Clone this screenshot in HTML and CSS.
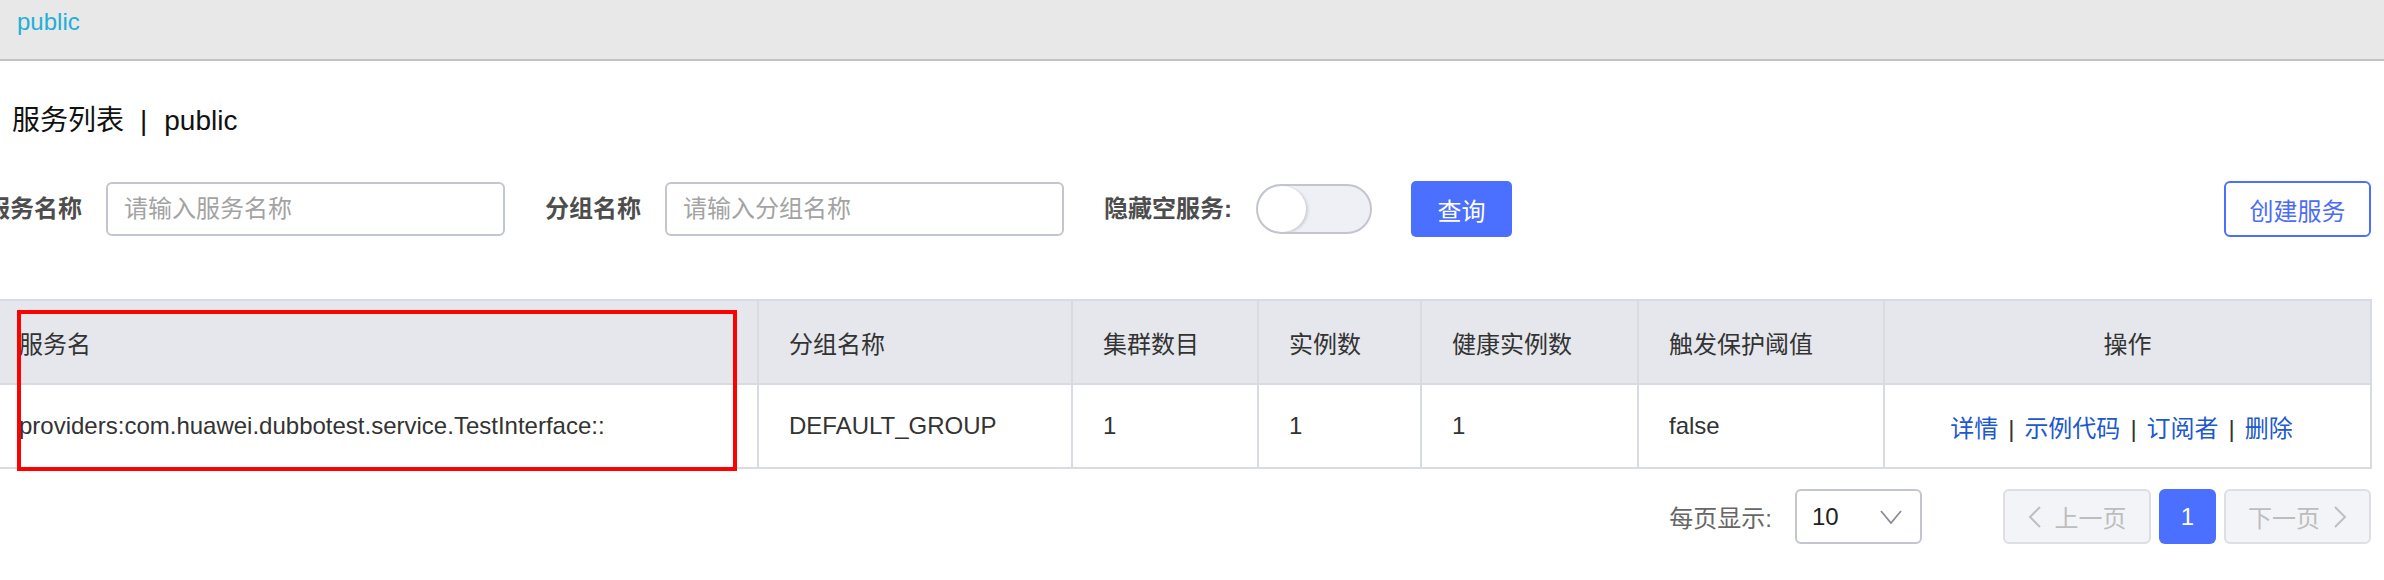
FILE: index.html
```html
<!DOCTYPE html>
<html lang="zh-CN">
<head>
<meta charset="utf-8">
<title>服务列表</title>
<link rel="stylesheet" href="styles.css">
</head>
<body>
<div class="topbar"><span class="ns">public</span></div>
<main class="main">
  <h1 class="title"><span>服务列表</span><span class="title-sep">|</span><span>public</span></h1>

  <div class="search">
    <label class="flabel first">服务名称</label>
    <input class="finput" type="text" placeholder="请输入服务名称">
    <label class="flabel spaced">分组名称</label>
    <input class="finput" type="text" placeholder="请输入分组名称">
    <label class="flabel spaced">隐藏空服务:</label>
    <span class="toggle"><span class="knob"></span></span>
    <button class="btn-primary" type="button">查询</button>
    <button class="btn-outline" type="button">创建服务</button>
  </div>

  <div class="table-wrap">
    <table class="grid">
      <colgroup>
        <col class="c-name"><col class="c-group"><col class="c-cluster"><col class="c-inst"><col class="c-healthy"><col class="c-threshold"><col class="c-ops">
      </colgroup>
      <thead>
        <tr>
          <th>服务名</th>
          <th>分组名称</th>
          <th>集群数目</th>
          <th>实例数</th>
          <th>健康实例数</th>
          <th>触发保护阈值</th>
          <th class="center">操作</th>
        </tr>
      </thead>
      <tbody>
        <tr>
          <td>providers:com.huawei.dubbotest.service.TestInterface::</td>
          <td>DEFAULT_GROUP</td>
          <td>1</td>
          <td>1</td>
          <td>1</td>
          <td>false</td>
          <td class="center ops"><a class="op">详情</a><span class="op-sep">|</span><a class="op">示例代码</a><span class="op-sep">|</span><a class="op">订阅者</a><span class="op-sep">|</span><a class="op">删除</a></td>
        </tr>
      </tbody>
    </table>
    <div class="highlight"></div>
  </div>

  <div class="pager">
    <span class="pager-label">每页显示:</span>
    <span class="select"><span class="select-val">10</span>
      <svg class="select-arrow" width="22" height="14" viewBox="0 0 22 14"><polyline points="1,1 11,13 21,1" fill="none" stroke="#8a8d96" stroke-width="1.8"/></svg>
    </span>
    <span class="pbtn prev"><svg width="13" height="22" viewBox="0 0 13 22"><polyline points="12,1 2,11 12,21" fill="none" stroke="#bdbfc4" stroke-width="2"/></svg><span>上一页</span></span>
    <span class="pbtn current">1</span>
    <span class="pbtn next"><span>下一页</span><svg width="13" height="22" viewBox="0 0 13 22"><polyline points="1,1 11,11 1,21" fill="none" stroke="#bdbfc4" stroke-width="2"/></svg></span>
  </div>
</main>
</body>
</html>
```

FILE: styles.css
```css
* { box-sizing: border-box; }
html, body { margin: 0; padding: 0; background: #fff; }
body {
  width: 2384px;
  overflow: hidden;
  font-family: "Liberation Sans", "Noto Sans CJK SC", sans-serif;
  color: #333;
  font-size: 24px;
}

.topbar {
  height: 61px;
  background: #e8e8e8;
  border-bottom: 2px solid #c3c3c3;
  padding: 10px 0 0 17px;
}
.ns {
  display: block;
  font-size: 24px;
  line-height: 24px;
  color: #1fafd7;
}

.main { padding: 0 13px 0 0; }

.title {
  margin: 33px 0 0 12px;
  height: 54px;
  line-height: 54px;
  font-size: 28px;
  font-weight: normal;
  color: #111;
}
.title-sep { margin: 0 17px 0 16px; }

.search {
  margin: 33px 0 0 -14px;
  height: 56px;
  display: flex;
  align-items: center;
}
.flabel {
  font-weight: bold;
  font-size: 24px;
  line-height: 30px;
  color: #4d4d4d;
  margin-right: 24px;
  white-space: nowrap;
}
.flabel.spaced { margin-left: 40px; }
.finput {
  width: 399px;
  height: 54px;
  border: 2px solid #c4c6cf;
  border-radius: 6px;
  padding: 0 16px;
  font: inherit;
  font-size: 24px;
  color: #333;
  outline: none;
  background: #fff;
}
.finput::placeholder { color: #a3a3a3; }

.toggle {
  width: 116px;
  height: 50px;
  border: 2px solid #c3c5ce;
  border-radius: 25px;
  background: #eef0f5;
  display: flex;
  align-items: center;
  overflow: hidden;
}
.knob {
  width: 48px;
  height: 46px;
  border-radius: 50%;
  background: #fff;
  box-shadow: 2px 1px 3px rgba(0,0,0,0.14);
}

.btn-primary {
  margin-left: 39px;
  width: 101px;
  height: 56px;
  border: none;
  border-radius: 5px;
  background: #4b6fff;
  color: #fff;
  font: inherit;
  font-size: 24px;
}
.btn-outline {
  margin-left: auto;
  width: 147px;
  height: 56px;
  border: 2px solid #4b6fff;
  border-radius: 6px;
  background: #fff;
  color: #4b6df5;
  font: inherit;
  font-size: 24px;
}

.table-wrap {
  position: relative;
  margin-top: 62px;
}
.grid {
  width: 2371px;
  table-layout: fixed;
  border-collapse: collapse;
}
.c-name { width: 758px; }
.c-group { width: 314px; }
.c-cluster { width: 186px; }
.c-inst { width: 163px; }
.c-healthy { width: 217px; }
.c-threshold { width: 246px; }
.c-ops { width: 487px; }

.grid th, .grid td {
  height: 84px;
  padding: 0 20px 0 30px;
  border: 2px solid #d8dbe1;
  text-align: left;
  font-weight: normal;
  font-size: 24px;
  color: #333;
  white-space: nowrap;
  vertical-align: middle;
}
.grid th { background: #e5e7ec; }
.grid th:first-child, .grid td:first-child { border-left: none; padding-left: 19px; }
.grid .center { text-align: center; padding-left: 20px; }
.grid .ops { padding-left: 14px; padding-right: 26px; }

.op { color: #2058cf; text-decoration: none; }
.op-sep { color: #333; margin: 0 10px; }

.highlight {
  position: absolute;
  top: 11px;
  left: 17px;
  width: 720px;
  height: 161px;
  border: 4px solid #ff0000;
  pointer-events: none;
}

.pager {
  margin-top: 20px;
  height: 55px;
  display: flex;
  justify-content: flex-end;
  align-items: center;
}
.pager-label { color: #666; margin-right: 23px; }
.select {
  width: 127px;
  height: 55px;
  border: 2px solid #c4c6cf;
  border-radius: 6px;
  display: flex;
  align-items: center;
  justify-content: space-between;
  padding: 0 18px 0 15px;
}
.select-val { color: #222; }
.pbtn {
  height: 55px;
  border-radius: 6px;
  display: flex;
  align-items: center;
  justify-content: center;
  gap: 14px;
  color: #bdbdbd;
}
.prev, .next {
  width: 148px;
  border: 2px solid #dddfe4;
  background: #f3f4f8;
}
.prev { margin-left: 81px; }
.next { margin-left: 8px; width: 147px; }
.current {
  margin-left: 8px;
  width: 57px;
  background: #4b6fff;
  color: #fff;
}
```
